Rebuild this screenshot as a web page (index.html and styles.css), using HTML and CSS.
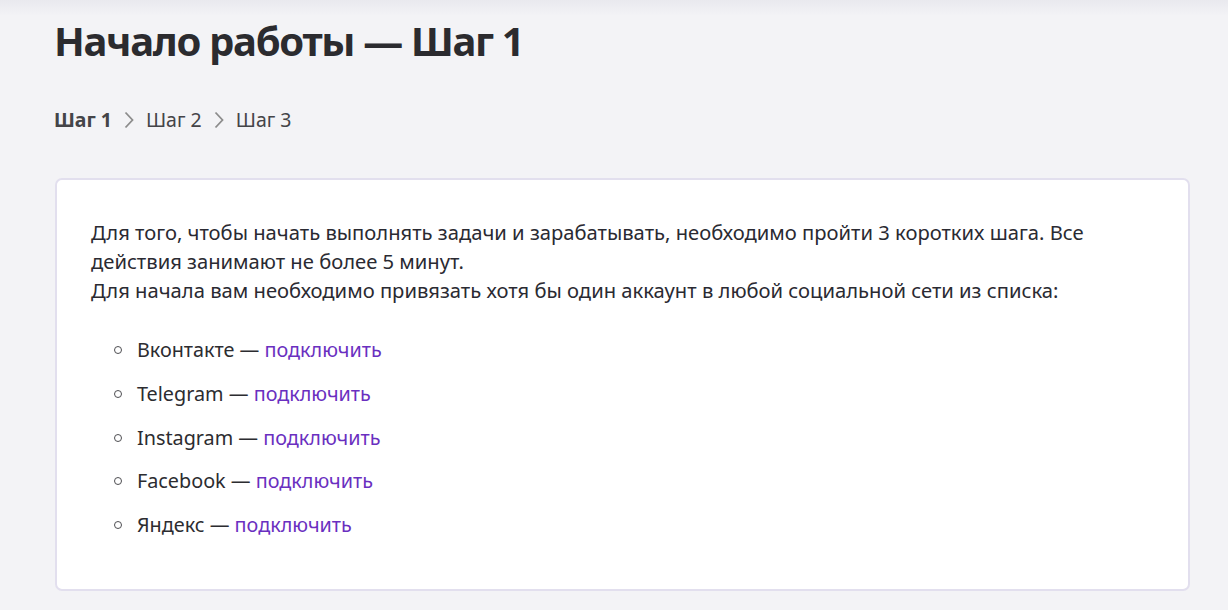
FILE: index.html
```html
<!DOCTYPE html>
<html lang="ru">
<head>
<meta charset="utf-8">
<title>Начало работы — Шаг 1</title>
<link rel="stylesheet" href="styles.css">
</head>
<body>
<div class="page">
  <h1 class="title">Начало работы — Шаг 1</h1>
  <nav class="steps">
    <span class="step step-active">Шаг 1</span>
    <svg class="chev" viewBox="0 0 10 18" width="10" height="18"><path d="M1.5 1.5 L8.5 9 L1.5 16.5" fill="none" stroke="#8c8c8c" stroke-width="1.8"/></svg>
    <span class="step">Шаг 2</span>
    <svg class="chev" viewBox="0 0 10 18" width="10" height="18"><path d="M1.5 1.5 L8.5 9 L1.5 16.5" fill="none" stroke="#8c8c8c" stroke-width="1.8"/></svg>
    <span class="step">Шаг 3</span>
  </nav>
  <section class="card">
    <p class="intro">Для того, чтобы начать выполнять задачи и зарабатывать, необходимо пройти 3 коротких шага. Все действия занимают не более 5 минут.<br>Для начала вам необходимо привязать хотя бы один аккаунт в любой социальной сети из списка:</p>
    <ul class="nets">
      <li>Вконтакте — <a href="#">подключить</a></li>
      <li>Telegram — <a href="#">подключить</a></li>
      <li>Instagram — <a href="#">подключить</a></li>
      <li>Facebook — <a href="#">подключить</a></li>
      <li>Яндекс — <a href="#">подключить</a></li>
    </ul>
  </section>
</div>
</body>
</html>
```

FILE: styles.css
```css
html, body {
  margin: 0;
  padding: 0;
}
body {
  background: linear-gradient(#e9e9ee 0, #f3f3f6 16px, #f3f3f6 100%);
  font-family: "Noto Sans", "Open Sans", sans-serif;
  color: #2c2c30;
  min-height: 610px;
}
.page {
  padding: 15px 38px 0 54px;
}
.title {
  margin: 0;
  font-size: 40px;
  line-height: 52px;
  font-weight: 700;
  color: #2b2b2f;
  letter-spacing: -1.3px;
}
.steps {
  display: flex;
  align-items: center;
  gap: 11px;
  margin-top: 39px;
  font-size: 19.5px;
  line-height: 28px;
  color: #444448;
}
.step-active {
  font-weight: 700;
}
.chev {
  display: block;
  margin: 0 1px;
}
.card {
  margin-top: 44px;
  margin-left: 1px;
  background: #fff;
  border: 2px solid #e2dfee;
  border-radius: 7px;
  padding: 38px 34px 50px 34px;
}
.intro {
  margin: 0;
  font-size: 20.2px;
  line-height: 29px;
  color: #2a2a32;
}
.nets {
  margin: 30px 0 0 0;
  padding-left: 46px;
  list-style: none;
  font-size: 19.8px;
  line-height: 29px;
}
.nets li {
  margin-bottom: 14.75px;
}
.nets li::before {
  content: "";
  display: inline-block;
  width: 6px;
  height: 6px;
  border: 1.5px solid #4e4e52;
  border-radius: 50%;
  margin-left: -23px;
  margin-right: 15px;
  vertical-align: 3px;
}
.nets li:last-child {
  margin-bottom: 0;
}
.nets a {
  color: #6a2fc0;
  text-decoration: none;
}
```
